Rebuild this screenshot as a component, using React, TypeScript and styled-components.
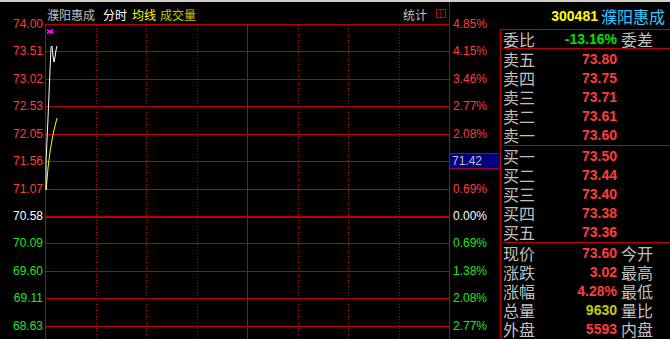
import React from 'react'
import styled, { createGlobalStyle } from 'styled-components'

const GlobalStyle = createGlobalStyle`
  html, body {
    margin: 0;
    padding: 0;
    background: #000;
  }
  body {
    font-family: "Liberation Sans", "Noto Sans CJK SC", sans-serif;
  }
`

const RED = '#ff3c3c'
const GREEN = '#1ee61e'
const WHITE = '#ffffff'
const GRAY = '#c0c0c0'
const GRID = '#c00000'

const ROW_H = 27.43
const COL_W = 50.5

const Screen = styled.div`
  width: 670px;
  height: 339px;
  background: #000;
  display: flex;
  flex-direction: column;
  overflow: hidden;
`

const TopStrip = styled.div`
  height: 2px;
  background: #d4d0c8;
`

const Main = styled.div`
  flex: 1;
  display: flex;
  min-height: 0;
`

const PriceAxis = styled.div<{ $side: 'left' | 'right' }>`
  display: flex;
  flex-direction: column;
  padding-top: 8.3px;
  width: ${(p) => (p.$side === 'left' ? '45px' : '50px')};
  border-left: ${(p) => (p.$side === 'right' ? `1px solid ${GRID}` : 'none')};
`

const AxisLabel = styled.div<{ $color: string; $side: 'left' | 'right' }>`
  height: ${ROW_H}px;
  flex: none;
  display: flex;
  align-items: center;
  justify-content: ${(p) => (p.$side === 'left' ? 'flex-end' : 'flex-start')};
  padding: ${(p) => (p.$side === 'left' ? '0 2px 0 0' : '0 0 0 3px')};
  font-size: 12px;
  color: ${(p) => p.$color};
  white-space: nowrap;
`

const CrossTag = styled.div`
  height: 14px;
  width: 100%;
  margin-left: -3px;
  padding-left: 2px;
  background: #000080;
  border-top: 1px solid #a00050;
  border-bottom: 1px solid #a00050;
  color: ${GRAY};
  font-size: 12px;
  line-height: 14px;
`

const ChartColumn = styled.div`
  width: 404px;
  display: flex;
  flex-direction: column;
`

const ChartHeader = styled.div`
  height: 20px;
  padding: 2px 2px 0 2px;
  display: flex;
  align-items: center;
  font-size: 12px;
  white-space: nowrap;
`

const HeaderItem = styled.span<{ $color: string; $gap?: number }>`
  color: ${(p) => p.$color};
  margin-right: ${(p) => p.$gap ?? 8}px;
`

const Spacer = styled.div`
  flex: 1;
`

const Plot = styled.svg`
  display: block;
  flex: none;
`

const Panel = styled.div`
  width: 170px;
  display: flex;
  flex-direction: column;
`

const PanelHeader = styled.div`
  height: 30px;
  display: flex;
  align-items: center;
  justify-content: flex-end;
  padding-right: 5px;
  gap: 3px;
`

const Code = styled.span`
  color: #ffff00;
  font-weight: bold;
  font-size: 14px;
`

const StockName = styled.span`
  color: #33ccff;
  font-size: 16px;
`

const PanelBody = styled.div`
  flex: 1;
  border-top: 1px solid ${GRID};
  border-left: 1px solid ${GRID};
  padding-left: 2px;
  display: flex;
  flex-direction: column;
`

const Section = styled.div<{ $pad?: number; $last?: boolean }>`
  padding-top: ${(p) => p.$pad ?? 0}px;
  border-bottom: ${(p) => (p.$last ? 'none' : `1px solid ${GRID}`)};
`

const Row = styled.div<{ $h?: number }>`
  display: grid;
  grid-template-columns: 38px 76px 1fr;
  align-items: center;
  height: ${(p) => p.$h ?? 19}px;
  white-space: nowrap;
`

const Label = styled.span`
  color: ${GRAY};
  font-size: 16px;
  line-height: 17px;
  font-family: "Noto Sans CJK SC", sans-serif;
`

const Value = styled.span<{ $color: string }>`
  color: ${(p) => p.$color};
  font-size: 14px;
  line-height: 17px;
  font-weight: bold;
  text-align: right;
`

const Extra = styled(Label)`
  padding-left: 4px;
`

const leftLabels: [string, string][] = [
  ['74.00', RED],
  ['73.51', RED],
  ['73.02', RED],
  ['72.53', RED],
  ['72.05', RED],
  ['71.56', RED],
  ['71.07', RED],
  ['70.58', WHITE],
  ['70.09', GREEN],
  ['69.60', GREEN],
  ['69.11', GREEN],
  ['68.63', GREEN],
]

const rightLabels: [string, string][] = [
  ['4.85%', RED],
  ['4.15%', RED],
  ['3.46%', RED],
  ['2.77%', RED],
  ['2.08%', RED],
  ['TAG', RED],
  ['0.69%', RED],
  ['0.00%', WHITE],
  ['0.69%', GREEN],
  ['1.38%', GREEN],
  ['2.08%', GREEN],
  ['2.77%', GREEN],
]

const sells = [
  ['卖五', '73.80'],
  ['卖四', '73.75'],
  ['卖三', '73.71'],
  ['卖二', '73.61'],
  ['卖一', '73.60'],
]

const buys = [
  ['买一', '73.50'],
  ['买二', '73.44'],
  ['买三', '73.40'],
  ['买四', '73.38'],
  ['买五', '73.36'],
]

const stats: [string, string, string, string][] = [
  ['现价', '73.60', RED, '今开'],
  ['涨跌', '3.02', RED, '最高'],
  ['涨幅', '4.28%', RED, '最低'],
  ['总量', '9630', '#c8c800', '量比'],
  ['外盘', '5593', RED, '内盘'],
]

// intraday lines, relative to plot origin (45, 24)
const toPts = (pts: number[][]) => pts.map(([x, y]) => `${x - 45},${y - 24}`).join(' ')

const priceLine = toPts([
  [46, 190],
  [46, 162],
  [47, 140],
  [48, 118],
  [49, 94],
  [50, 70],
  [51, 47],
  [52, 46],
  [53, 56],
  [54, 62],
  [55, 57],
  [56, 50],
  [57, 46],
])

const avgLine = toPts([
  [46, 190],
  [47, 180],
  [48, 168],
  [49, 160],
  [50, 152],
  [52, 140],
  [54, 130],
  [56, 122],
  [57, 118],
])

const IntradayPlot = () => {
  const w = 404
  const h = 315
  return (
    <Plot width={w} height={h} viewBox={`0 0 ${w} ${h}`}>
      <line x1={0.5} y1={0} x2={0.5} y2={h} stroke={GRID} />
      {[1, 2, 3, 5, 6, 7].map((k) => (
        <line
          key={k}
          x1={Math.round(k * COL_W) + 0.5}
          y1={1}
          x2={Math.round(k * COL_W) + 0.5}
          y2={h}
          stroke={GRID}
          strokeDasharray="1 2"
        />
      ))}
      <line x1={202.5} y1={0} x2={202.5} y2={h} stroke={GRID} />
      {leftLabels.map((_, i) => {
        const y = Math.round(i * ROW_H)
        const thick = i === 7
        return (
          <line
            key={i}
            x1={0}
            y1={thick ? y + 1 : y + 0.5}
            x2={w}
            y2={thick ? y + 1 : y + 0.5}
            stroke={GRID}
            strokeWidth={thick ? 2 : 1}
          />
        )
      })}
      <polyline points={avgLine} fill="none" stroke="#ffff00" strokeWidth={1} />
      <polyline points={priceLine} fill="none" stroke="#ffffff" strokeWidth={1} />
      <path
        d="M2 5h1v1h-1zM7 5h1v1h-1zM2 6h6v1h-6zM3 7h4v1h-4zM2 8h6v1h-6zM2 9h1v1h-1zM7 9h1v1h-1z"
        fill="#ff00ff"
      />
    </Plot>
  )
}

const SplitIcon = () => (
  <svg width="11" height="10" viewBox="0 0 11 10">
    <rect x="0.5" y="0.5" width="9" height="8" fill="none" stroke="#d00000" />
    <line x1="5" y1="0.5" x2="5" y2="8.5" stroke="#d00000" />
  </svg>
)

export default function App() {
  return (
    <>
      <GlobalStyle />
      <Screen>
        <TopStrip />
        <Main>
          <PriceAxis $side="left">
            {leftLabels.map(([t, c], i) => (
              <AxisLabel key={i} $color={c} $side="left">
                {t}
              </AxisLabel>
            ))}
          </PriceAxis>

          <ChartColumn>
            <ChartHeader>
              <HeaderItem $color={GRAY} $gap={8}>濮阳惠成</HeaderItem>
              <HeaderItem $color={WHITE} $gap={5}>分时</HeaderItem>
              <HeaderItem $color="#ffff00" $gap={4}>均线</HeaderItem>
              <HeaderItem $color="#c8c800">成交量</HeaderItem>
              <Spacer />
              <HeaderItem $color={GRAY} $gap={9}>统计</HeaderItem>
              <SplitIcon />
            </ChartHeader>
            <IntradayPlot />
          </ChartColumn>

          <PriceAxis $side="right">
            {rightLabels.map(([t, c], i) => (
              <AxisLabel key={i} $color={c} $side="right">
                {t === 'TAG' ? <CrossTag>71.42</CrossTag> : t}
              </AxisLabel>
            ))}
          </PriceAxis>

          <Panel>
            <PanelHeader>
              <Code>300481</Code>
              <StockName>濮阳惠成</StockName>
            </PanelHeader>
            <PanelBody>
              <Section>
                <Row $h={18}>
                  <Label>委比</Label>
                  <Value $color="#00e000">-13.16%</Value>
                  <Extra>委差</Extra>
                </Row>
              </Section>
              <Section $pad={1}>
                {sells.map(([l, v]) => (
                  <Row key={l}>
                    <Label>{l}</Label>
                    <Value $color={RED}>{v}</Value>
                    <span />
                  </Row>
                ))}
              </Section>
              <Section $pad={1}>
                {buys.map(([l, v]) => (
                  <Row key={l}>
                    <Label>{l}</Label>
                    <Value $color={RED}>{v}</Value>
                    <span />
                  </Row>
                ))}
              </Section>
              <Section $pad={1} $last>
                {stats.map(([l, v, c, e]) => (
                  <Row key={l}>
                    <Label>{l}</Label>
                    <Value $color={c}>{v}</Value>
                    <Extra>{e}</Extra>
                  </Row>
                ))}
              </Section>
            </PanelBody>
          </Panel>
        </Main>
      </Screen>
    </>
  )
}
